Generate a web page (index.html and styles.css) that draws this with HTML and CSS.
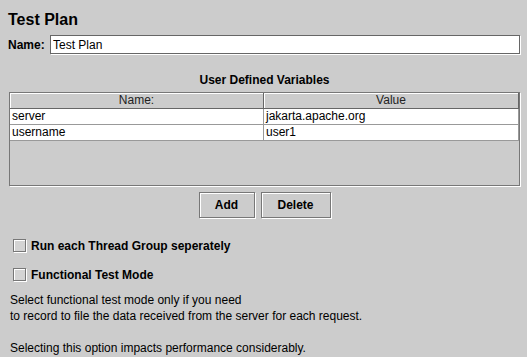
FILE: index.html
```html
<!DOCTYPE html>
<html lang="en">
<head>
    <meta charset="UTF-8">
    <title>Test Plan</title>
    <link rel="stylesheet" href="styles.css">
</head>
<body>
    <div class="panel">
        <h1 class="title">Test Plan</h1>
        <div class="name-row">
            <label class="name-label" for="plan-name">Name:</label>
            <input class="text-field" id="plan-name" type="text" value="Test Plan">
        </div>

        <div class="section-label">User Defined Variables</div>
        <div class="vars">
            <div class="vars-row head">
                <div class="cell">Name:</div>
                <div class="cell">Value</div>
            </div>
            <div class="vars-row">
                <div class="cell">server</div>
                <div class="cell">jakarta.apache.org</div>
            </div>
            <div class="vars-row">
                <div class="cell">username</div>
                <div class="cell">user1</div>
            </div>
        </div>

        <div class="buttons">
            <button class="btn btn-add">Add</button>
            <button class="btn btn-delete">Delete</button>
        </div>

        <label class="check-row first">
            <input class="check" type="checkbox">
            <span>Run each Thread Group seperately</span>
        </label>
        <label class="check-row">
            <input class="check" type="checkbox">
            <span>Functional Test Mode</span>
        </label>

        <div class="note">
            <div>Select functional test mode only if you need</div>
            <div>to record to file the data received from the server for each request.</div>
            <div class="blank"></div>
            <div>Selecting this option impacts performance considerably.</div>
        </div>
    </div>
</body>
</html>
```

FILE: styles.css
```css
html, body {
    margin: 0;
    background-color: #cccccc;
}

body {
    font-family: 'Liberation Sans', Arial, sans-serif;
    font-size: 12px;
    color: #000000;
    overflow: hidden;
}

.panel {
    display: flex;
    flex-direction: column;
    padding: 0 7px 0 8px;
}

.title {
    margin: 11px 0 0;
    font-size: 16px;
    line-height: 18px;
    height: 18px;
    font-weight: bold;
}

.name-row {
    display: flex;
    align-items: center;
    margin-top: 6px;
    height: 19px;
}

.name-label {
    font-weight: bold;
    width: 42px;
}

.text-field {
    flex: 1;
    height: 19px;
    box-sizing: border-box;
    margin: 0 0 0 0;
    padding: 0 2px;
    border: 1px solid #666666;
    box-shadow: 1px 1px 0 #ffffff;
    background: #ffffff;
    font-family: 'Liberation Sans', Arial, sans-serif;
    font-size: 12px;
    outline: none;
}

.section-label {
    margin-top: 19px;
    margin-left: 1px;
    height: 14px;
    line-height: 14px;
    font-weight: bold;
    text-align: center;
}

.vars {
    margin: 5px 0 0 1px;
    height: 94px;
    box-sizing: border-box;
    border: 1px solid #777777;
    box-shadow: 1px 1px 0 #ffffff;
    background-color: #cccccc;
}

.vars-row {
    display: grid;
    grid-template-columns: 254px 1fr;
    height: 16px;
    box-sizing: border-box;
    background-color: #ffffff;
    border-bottom: 1px solid #999999;
    line-height: 15px;
}

.vars-row .cell {
    padding-left: 2px;
    border-right: 1px solid #999999;
    white-space: nowrap;
    overflow: hidden;
}

.vars-row.head {
    background-color: #cccccc;
    border-bottom: 1px solid #666666;
}

.vars-row.head .cell {
    text-align: center;
    padding-left: 0;
    border-right: 1px solid #666666;
    box-shadow: inset 1px 1px 0 #ffffff;
    color: #222222;
}

.buttons {
    display: flex;
    justify-content: center;
    gap: 6px;
    margin: 6px 0 0 1px;
}

.btn {
    height: 26px;
    box-sizing: border-box;
    border: 1px solid #777777;
    box-shadow: 1px 1px 0 #ffffff, inset 1px 1px 0 #ffffff;
    background-color: #cccccc;
    font-family: 'Liberation Sans', Arial, sans-serif;
    font-size: 12px;
    font-weight: bold;
    color: #000000;
    padding: 0;
}

.btn-add {
    width: 56px;
}

.btn-delete {
    width: 70px;
}

.check-row {
    display: flex;
    align-items: center;
    height: 15px;
    margin-top: 14px;
    margin-left: 5px;
    font-weight: bold;
}

.check-row.first {
    margin-top: 20px;
}

.check {
    appearance: none;
    width: 13px;
    height: 13px;
    margin: 0 5px 0 0;
    box-sizing: border-box;
    border: 1px solid #777777;
    box-shadow: 1px 1px 0 #ffffff, inset 1px 1px 0 #ffffff;
    background-color: #d4d4d4;
}

.note {
    margin: 10px 0 0 2px;
    line-height: 16px;
}

.blank {
    height: 16px;
}
```
